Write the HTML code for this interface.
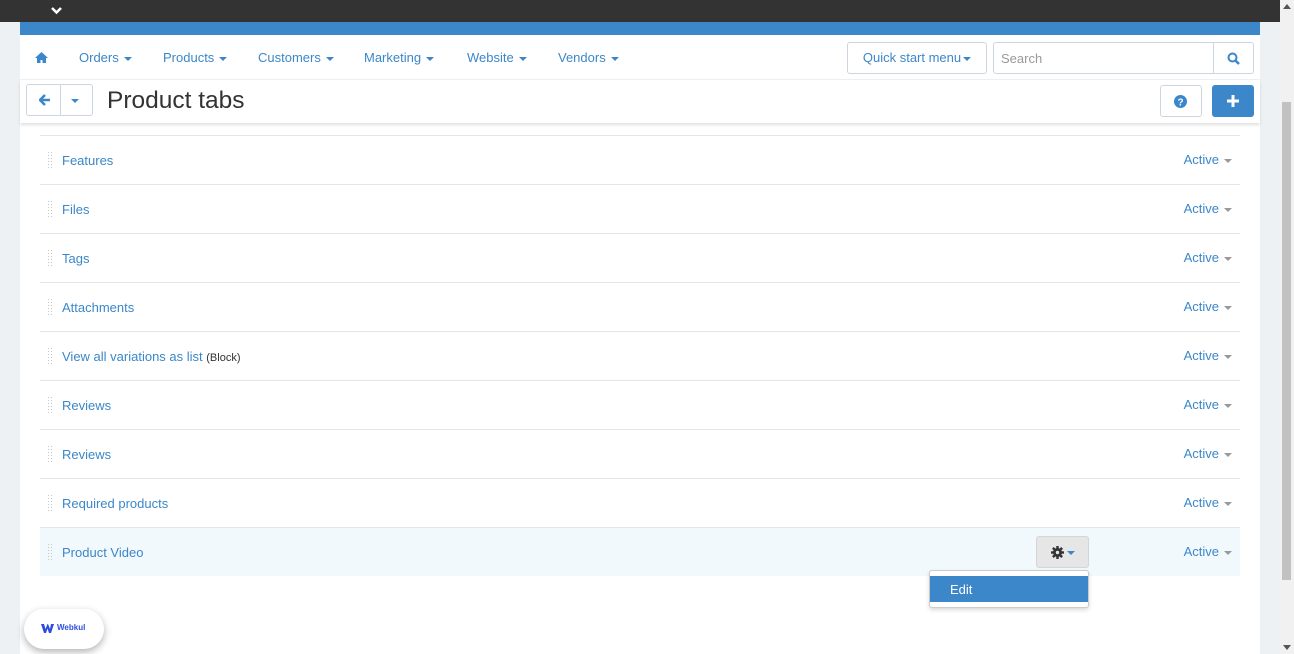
<!DOCTYPE html>
<html><head><style>
*{box-sizing:border-box;margin:0;padding:0}
body{width:1294px;height:654px;overflow:hidden;background:#eef1f3;font-family:"Liberation Sans",sans-serif;font-size:13px;color:#3b87c9;position:relative}
.top{position:absolute;left:0;top:0;width:1280px;height:22px;background:#333}
.sb{position:absolute;left:1280px;top:0;width:14px;height:654px;background:#f1f1f1}
.thumb{position:absolute;left:1282px;top:102px;width:9px;height:478px;background:#c1c1c1}
.main{position:absolute;left:20px;top:22px;width:1240px;height:632px;background:#fff}
.blue{height:13px;background:#3b87c9}
.nav{height:45px;position:relative;border-bottom:1px solid #eef0f2}
.nav span{position:absolute;top:15px;font-size:13px}
.car{display:inline-block;width:0;height:0;border-left:4px solid transparent;border-right:4px solid transparent;border-top:4px solid #3b87c9;vertical-align:middle;margin-left:5px}
.gc{border-top-color:#999}
.btn{position:absolute;border:1px solid #cdd6e0;border-radius:3px;background:#fff}
.title{height:43px;position:relative;box-shadow:0 2px 3px rgba(0,0,0,.12)}
.row{position:absolute;left:20px;width:1200px;height:49px;border-top:1px solid #e3e6e9}
.row .d{position:absolute;left:7px;top:15px;width:6px;height:18px;background-image:radial-gradient(#c8c8c8 0.6px,transparent 0.8px);background-size:3px 3px}
.row .n{position:absolute;left:22px;top:17px}
.row .a{position:absolute;right:8px;top:16px}
</style></head><body>
<div class="top"><svg style="position:absolute;left:51px;top:7px" width="11" height="8"><path d="M1 1l4.5 4.5L10 1" stroke="#fff" stroke-width="2.5" fill="none"/></svg></div>
<div class="sb"></div><div class="thumb"></div>
<svg style="position:absolute;left:1283px;top:4px" width="8" height="5"><path d="M0 5L4 0L8 5z" fill="#555"/></svg>
<svg style="position:absolute;left:1283px;top:645px" width="8" height="5"><path d="M0 0L4 5L8 0z" fill="#555"/></svg>
<div class="main">
<div class="blue"></div>
<div class="nav">
<svg style="position:absolute;left:15px;top:17px" width="13" height="11"><path d="M6.5 0L0 6h2v5h3.5V8h2v3H11V6h2z" fill="#3b87c9"/></svg>
<span style="left:59px">Orders<i class="car"></i></span>
<span style="left:143px">Products<i class="car"></i></span>
<span style="left:238px">Customers<i class="car"></i></span>
<span style="left:344px">Marketing<i class="car"></i></span>
<span style="left:447px">Website<i class="car"></i></span>
<span style="left:538px">Vendors<i class="car"></i></span>
<div class="btn" style="left:827px;top:7px;width:140px;height:32px;text-align:center;line-height:30px">Quick start menu<i class="car" style="margin-left:2px"></i></div>
<div class="btn" style="left:973px;top:7px;width:261px;height:32px"><span style="left:7px;top:8px;color:#999">Search</span><div style="position:absolute;left:219px;top:0;width:1px;height:30px;background:#cdd6e0"></div>
<svg style="position:absolute;left:233px;top:9px" width="13" height="13"><circle cx="5.5" cy="5.5" r="4" stroke="#3b87c9" stroke-width="2" fill="none"/><path d="M8.5 8.5L12 12" stroke="#3b87c9" stroke-width="2.5"/></svg></div>
</div>
<div class="title">
<div class="btn" style="left:6px;top:4px;width:67px;height:32px"><div style="position:absolute;left:33px;top:0;width:1px;height:30px;background:#cdd6e0"></div>
<svg style="position:absolute;left:12px;top:9px" width="12" height="12"><path d="M6 1L1 6l5 5M1.5 6H11" stroke="#3b87c9" stroke-width="2.5" fill="none"/></svg>
<i class="car" style="position:absolute;left:44px;top:14px;margin:0"></i></div>
<div style="position:absolute;left:87px;top:7px;font-size:24.5px;color:#333">Product tabs</div>
<div class="btn" style="left:1140px;top:5px;width:42px;height:32px"><svg style="position:absolute;left:13px;top:9px" width="13" height="13"><circle cx="6.5" cy="6.5" r="6.5" fill="#3b87c9"/><text x="6.5" y="10.5" font-size="10" font-weight="bold" fill="#fff" text-anchor="middle" font-family="Liberation Sans">?</text></svg></div>
<div style="position:absolute;left:1192px;top:5px;width:42px;height:32px;background:#3b87c9;border-radius:3px"><svg style="position:absolute;left:15px;top:10px" width="12" height="12"><path d="M6 0v12M0 6h12" stroke="#fff" stroke-width="3"/></svg></div>
</div>
<div class="row" style="top:113px"><i class="d"></i><span class="n">Features</span><span class="a">Active<i class="car gc"></i></span></div>
<div class="row" style="top:162px"><i class="d"></i><span class="n">Files</span><span class="a">Active<i class="car gc"></i></span></div>
<div class="row" style="top:211px"><i class="d"></i><span class="n">Tags</span><span class="a">Active<i class="car gc"></i></span></div>
<div class="row" style="top:260px"><i class="d"></i><span class="n">Attachments</span><span class="a">Active<i class="car gc"></i></span></div>
<div class="row" style="top:309px"><i class="d"></i><span class="n">View all variations as list <small style="color:#333;font-size:11px">(Block)</small></span><span class="a">Active<i class="car gc"></i></span></div>
<div class="row" style="top:358px"><i class="d"></i><span class="n">Reviews</span><span class="a">Active<i class="car gc"></i></span></div>
<div class="row" style="top:407px"><i class="d"></i><span class="n">Reviews</span><span class="a">Active<i class="car gc"></i></span></div>
<div class="row" style="top:456px"><i class="d"></i><span class="n">Required products</span><span class="a">Active<i class="car gc"></i></span></div>
<div class="row" style="top:505px;background:#f2f9fd"><i class="d"></i><span class="n">Product Video</span><span class="a">Active<i class="car gc"></i></span>
<div style="position:absolute;left:996px;top:8px;width:53px;height:32px;background:#e6e6e6;border:1px solid #d5d5d5;border-radius:3px"><svg style="position:absolute;left:14px;top:9px" width="13" height="13" viewBox="0 0 13 13"><g fill="#333"><circle cx="6.5" cy="6.5" r="4.5"/><rect x="5.3" y="0" width="2.4" height="13"/><rect x="0" y="5.3" width="13" height="2.4"/><rect x="5.3" y="0" width="2.4" height="13" transform="rotate(45 6.5 6.5)"/><rect x="5.3" y="0" width="2.4" height="13" transform="rotate(-45 6.5 6.5)"/></g><circle cx="6.5" cy="6.5" r="1.7" fill="#e6e6e6"/></svg><i class="car" style="position:absolute;left:30px;top:14px;margin:0"></i></div>
</div>
<div style="position:absolute;left:909px;top:548px;width:160px;height:38px;background:#fff;border:1px solid #ccc;border-radius:3px;box-shadow:0 2px 4px rgba(0,0,0,.15)"><div style="margin-top:5px;height:26px;background:#3b87c9;color:#fff;padding:6px 20px">Edit</div></div>
</div>
<div style="position:absolute;left:24px;top:609px;width:80px;height:40px;background:#fff;border-radius:20px;box-shadow:0 3px 8px rgba(0,0,0,.3)"><svg style="position:absolute;left:17px;top:15px" width="13" height="9"><path d="M0 0h3l1.5 5L6.5 0h0.5l2 5L10 0h3l-3 9H8L6.5 4.5 5 9H3z" fill="#2d4de0"/></svg><span style="position:absolute;left:33px;top:14px;font-size:8px;font-weight:bold;color:#2d4de0">Webkul</span></div>
</body></html>
